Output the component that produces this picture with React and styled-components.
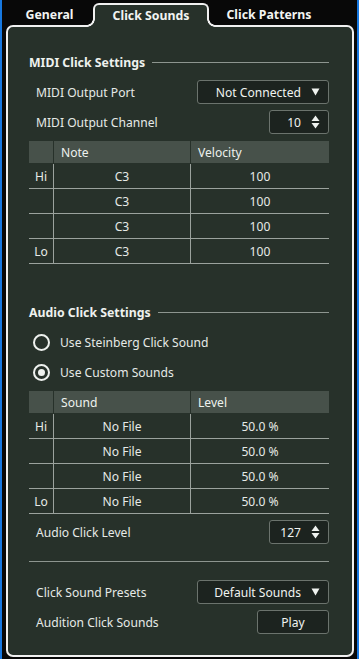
import React from "react";
import styled, { createGlobalStyle } from "styled-components";

const GlobalStyle = createGlobalStyle`
  * { box-sizing: border-box; }
  html, body { margin: 0; padding: 0; background: #080808; }
  body {
    font-family: "Noto Sans", "Open Sans", sans-serif;
    font-size: 12.1px;
    color: #e6eae7;
  }
`;

const panelBg = "#27312a";
const edge = "#f0f0f0";

const Frame = styled.div`
  height: 659px;
  border-left: 2px solid #1778e0;
  border-right: 2px solid #1778e0;
  background: #080808;
  overflow: hidden;
`;

const TabBar = styled.div`
  display: flex;
  align-items: flex-end;
  height: 25px;
  padding-left: 4px;
`;

const Tab = styled.div`
  position: relative;
  z-index: 1;
  display: flex;
  align-items: center;
  justify-content: center;
  flex: none;
  width: ${(p) => p.$w}px;
  height: ${(p) => (p.$active ? "24px" : "22px")};
  margin-bottom: ${(p) => (p.$active ? "-2px" : "0")};
  padding-bottom: ${(p) => (p.$active ? "1px" : "0")};
  font-weight: 700;
  font-size: 12.3px;
  white-space: nowrap;
  color: #f2f4f2;
  background: ${(p) => (p.$active ? panelBg : "transparent")};
  border: ${(p) => (p.$active ? `2px solid ${edge}` : "none")};
  border-bottom: none;
  border-radius: 6px 6px 0 0;

  &::before,
  &::after {
    content: "";
    display: ${(p) => (p.$active ? "block" : "none")};
    position: absolute;
    bottom: 0;
    width: 8px;
    height: 8px;
  }
  &::before {
    left: -8px;
    background: radial-gradient(
      circle at 0 0,
      #080808 5.5px,
      ${edge} 6px,
      ${edge} 7.5px,
      ${panelBg} 8px
    );
  }
  &::after {
    right: -8px;
    background: radial-gradient(
      circle at 100% 0,
      #080808 5.5px,
      ${edge} 6px,
      ${edge} 7.5px,
      ${panelBg} 8px
    );
  }
`;

const Panel = styled.div`
  margin: 0 3px 0 4px;
  border: 2px solid ${edge};
  border-radius: 7px;
  background: ${panelBg};
  padding: 25px 23px 21px 21px;
`;

const SectionHeader = styled.div`
  display: flex;
  align-items: center;
  gap: 7px;
  height: 20px;
  margin-top: ${(p) => p.$top || 0}px;
  font-weight: 700;
  font-size: 12.3px;
  white-space: nowrap;
  color: #eef1ee;
`;

const SectionLine = styled.div`
  flex: 1;
  height: 1px;
  background: #8d958f;
`;

const Row = styled.div`
  display: flex;
  align-items: center;
  justify-content: space-between;
  height: 24px;
  margin-top: ${(p) => p.$top ?? 6}px;
  padding-left: 7px;
`;

const Label = styled.span`
  white-space: nowrap;
`;

const Control = styled.div`
  display: flex;
  align-items: center;
  justify-content: ${(p) => (p.$center ? "center" : "flex-end")};
  gap: 10px;
  width: ${(p) => p.$w}px;
  height: 24px;
  padding: 0 8px;
  background: #1c231f;
  border: 1px solid #6b736d;
  border-radius: 3px;
  color: #f0f3f0;
  white-space: nowrap;
`;

const SpinArrows = () => (
  <svg width="9" height="14" viewBox="0 0 9 14">
    <path d="M4.5 0.5 L8.5 6 L0.5 6 Z" fill="#f0f3f0" />
    <path d="M4.5 13.5 L8.5 8 L0.5 8 Z" fill="#f0f3f0" />
  </svg>
);

const DropArrow = () => (
  <svg width="9" height="8" viewBox="0 0 9 8">
    <path d="M0.5 0.5 L8.5 0.5 L4.5 7.5 Z" fill="#f0f3f0" />
  </svg>
);

const Table = styled.div`
  margin-top: 7px;
`;

const TableRow = styled.div`
  display: grid;
  grid-template-columns: 25px 137px 1fr;
  height: ${(p) => (p.$head ? "22px" : "25px")};
  margin-bottom: ${(p) => (p.$head ? "1px" : "0")};
  border-bottom: ${(p) => (p.$head ? "none" : "1px solid #9ba29d")};
  background: ${(p) => (p.$head ? "#47514a" : "transparent")};
`;

const HeadCell = styled.div`
  display: flex;
  align-items: center;
  padding-left: 7px;
  border-right: ${(p) => (p.$last ? "none" : `1px solid ${panelBg}`)};
  color: #eef1ee;
`;

const Cell = styled.div`
  display: flex;
  align-items: center;
  justify-content: center;
  border-right: ${(p) => (p.$last ? "none" : "1px solid #9ba29d")};
`;

const Separator = styled.div`
  height: 1px;
  background: #8d958f;
  margin-top: 17px;
  margin-bottom: 18px;
`;

const RadioRow = styled.div`
  display: flex;
  align-items: center;
  gap: 10px;
  height: 24px;
  margin-top: ${(p) => p.$top ?? 6}px;
  padding-left: 4px;
`;

const RadioCircle = styled.span`
  display: flex;
  align-items: center;
  justify-content: center;
  width: 17px;
  height: 17px;
  border: 2px solid #eef1ee;
  border-radius: 50%;
  &::after {
    content: "";
    display: ${(p) => (p.$checked ? "block" : "none")};
    width: 7px;
    height: 7px;
    border-radius: 50%;
    background: #eef1ee;
  }
`;

const ClickTable = ({ cols, rows }) => (
  <Table>
    <TableRow $head>
      <HeadCell />
      <HeadCell>{cols[0]}</HeadCell>
      <HeadCell $last>{cols[1]}</HeadCell>
    </TableRow>
    {rows.map((r, i) => (
      <TableRow key={i}>
        <Cell>{r[0]}</Cell>
        <Cell>{r[1]}</Cell>
        <Cell $last>{r[2]}</Cell>
      </TableRow>
    ))}
  </Table>
);

const midiRows = [
  ["Hi", "C3", "100"],
  ["", "C3", "100"],
  ["", "C3", "100"],
  ["Lo", "C3", "100"],
];

const audioRows = [
  ["Hi", "No File", "50.0 %"],
  ["", "No File", "50.0 %"],
  ["", "No File", "50.0 %"],
  ["Lo", "No File", "50.0 %"],
];

export default function App() {
  return (
    <>
      <GlobalStyle />
      <Frame>
        <TabBar>
          <Tab $w={87}>General</Tab>
          <Tab $w={116} $active>Click Sounds</Tab>
          <Tab $w={120}>Click Patterns</Tab>
        </TabBar>
        <Panel>
          <SectionHeader>
            MIDI Click Settings
            <SectionLine />
          </SectionHeader>
          <Row $top={8}>
            <Label>MIDI Output Port</Label>
            <Control $w={132}>
              Not Connected
              <DropArrow />
            </Control>
          </Row>
          <Row>
            <Label>MIDI Output Channel</Label>
            <Control $w={60}>
              10
              <SpinArrows />
            </Control>
          </Row>
          <ClickTable cols={["Note", "Velocity"]} rows={midiRows} />

          <SectionHeader $top={38}>
            Audio Click Settings
            <SectionLine />
          </SectionHeader>
          <RadioRow $top={8}>
            <RadioCircle />
            <Label>Use Steinberg Click Sound</Label>
          </RadioRow>
          <RadioRow>
            <RadioCircle $checked />
            <Label>Use Custom Sounds</Label>
          </RadioRow>
          <ClickTable cols={["Sound", "Level"]} rows={audioRows} />
          <Row>
            <Label>Audio Click Level</Label>
            <Control $w={60}>
              127
              <SpinArrows />
            </Control>
          </Row>

          <Separator />

          <Row $top={0}>
            <Label>Click Sound Presets</Label>
            <Control $w={132}>
              Default Sounds
              <DropArrow />
            </Control>
          </Row>
          <Row>
            <Label>Audition Click Sounds</Label>
            <Control $w={72} $center>
              Play
            </Control>
          </Row>
        </Panel>
      </Frame>
    </>
  );
}
